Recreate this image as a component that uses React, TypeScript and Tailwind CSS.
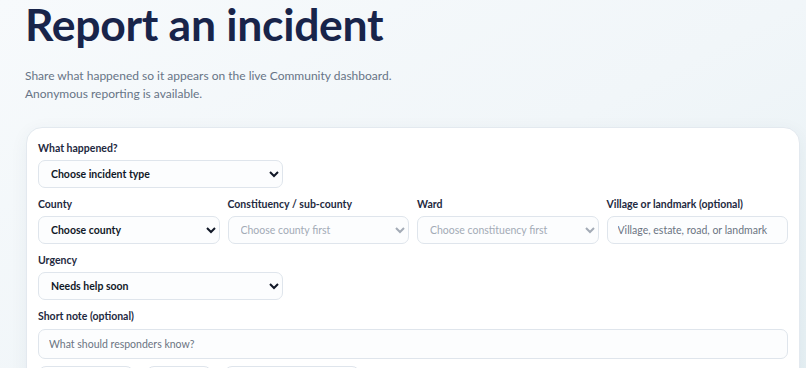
import React from 'react'

const font = { fontFamily: 'Lato, "Noto Sans", Arial, sans-serif' }

function Label({ children }: { children: React.ReactNode }) {
  return <label className="block text-[10.5px] leading-4 font-bold text-[#1e2940]">{children}</label>
}

const fieldBase =
  'mt-[4px] block w-full h-[28px] rounded-[7px] border border-[#dfe5ec] bg-[#fcfdfe] text-[10.5px] outline-none'

export default function App() {
  return (
    <div
      className="min-h-screen overflow-hidden bg-gradient-to-br from-[#f7fafc] via-[#f1f6f9] to-[#e6f0f4] pl-[25px] pr-[6px]"
      style={font}
    >
      <h1 className="-mt-[4px] text-[44.5px] leading-[56px] font-bold tracking-[-0.3px] text-[#18244a]">
        Report an incident
      </h1>
      <p className="mt-[15px] text-[12px] leading-[17.5px] text-[#677486]">
        Share what happened so it appears on the live Community dashboard.
        <br />
        Anonymous reporting is available.
      </p>

      <div className="ml-px mt-[25px] rounded-[16px] border border-[#e3e9ef] bg-white px-[11px] pt-[12px] pb-4 shadow-[0_4px_18px_rgba(30,60,90,0.06)]">
        {/* What happened */}
        <div className="grid grid-cols-3 gap-2">
          <div>
            <Label>What happened?</Label>
            <select className={`${fieldBase} px-2 font-bold text-[#111827]`} defaultValue="">
              <option value="">Choose incident type</option>
              <option>Flooding</option>
              <option>Fire</option>
              <option>Medical emergency</option>
            </select>
          </div>
        </div>

        {/* Location */}
        <div className="mt-2 grid grid-cols-4 gap-2">
          <div>
            <Label>County</Label>
            <select className={`${fieldBase} px-2 font-bold text-[#111827]`} defaultValue="">
              <option value="">Choose county</option>
              <option>Nairobi</option>
              <option>Mombasa</option>
            </select>
          </div>
          <div>
            <Label>Constituency / sub-county</Label>
            <select disabled className={`${fieldBase} px-2 text-[#a3abb6]`} defaultValue="">
              <option value="">Choose county first</option>
            </select>
          </div>
          <div>
            <Label>Ward</Label>
            <select disabled className={`${fieldBase} px-2 text-[#a3abb6]`} defaultValue="">
              <option value="">Choose constituency first</option>
            </select>
          </div>
          <div>
            <Label>Village or landmark (optional)</Label>
            <input
              type="text"
              placeholder="Village, estate, road, or landmark"
              className={`${fieldBase} px-2.5 text-[#111827] placeholder:text-[#6b7482]`}
            />
          </div>
        </div>

        {/* Urgency */}
        <div className="mt-2 grid grid-cols-3 gap-2">
          <div>
            <Label>Urgency</Label>
            <select className={`${fieldBase} px-2 font-bold text-[#111827]`} defaultValue="soon">
              <option value="now">Urgent, right now</option>
              <option value="soon">Needs help soon</option>
              <option value="info">Just informing</option>
            </select>
          </div>
        </div>

        {/* Note */}
        <div className="mt-[8px]">
          <Label>Short note (optional)</Label>
          <input
            type="text"
            placeholder="What should responders know?"
            className={`${fieldBase} mt-[5px] h-[30px] px-2.5 text-[#111827] placeholder:text-[#6b7482]`}
          />
        </div>

        <div className="mt-[7px] flex gap-3">
          <button className="h-[30px] w-[96px] rounded-[8px] border border-[#dfe5ec] bg-white text-[10.5px] font-bold text-[#1e2940]">
            Add photo
          </button>
          <button className="h-[30px] w-[66px] rounded-[8px] border border-[#dfe5ec] bg-white text-[10.5px] font-bold text-[#1e2940]">
            Location
          </button>
          <button className="h-[30px] w-[136px] rounded-[8px] border border-[#dfe5ec] bg-white text-[10.5px] font-bold text-[#1e2940]">
            Report anonymously
          </button>
        </div>
      </div>
    </div>
  )
}
